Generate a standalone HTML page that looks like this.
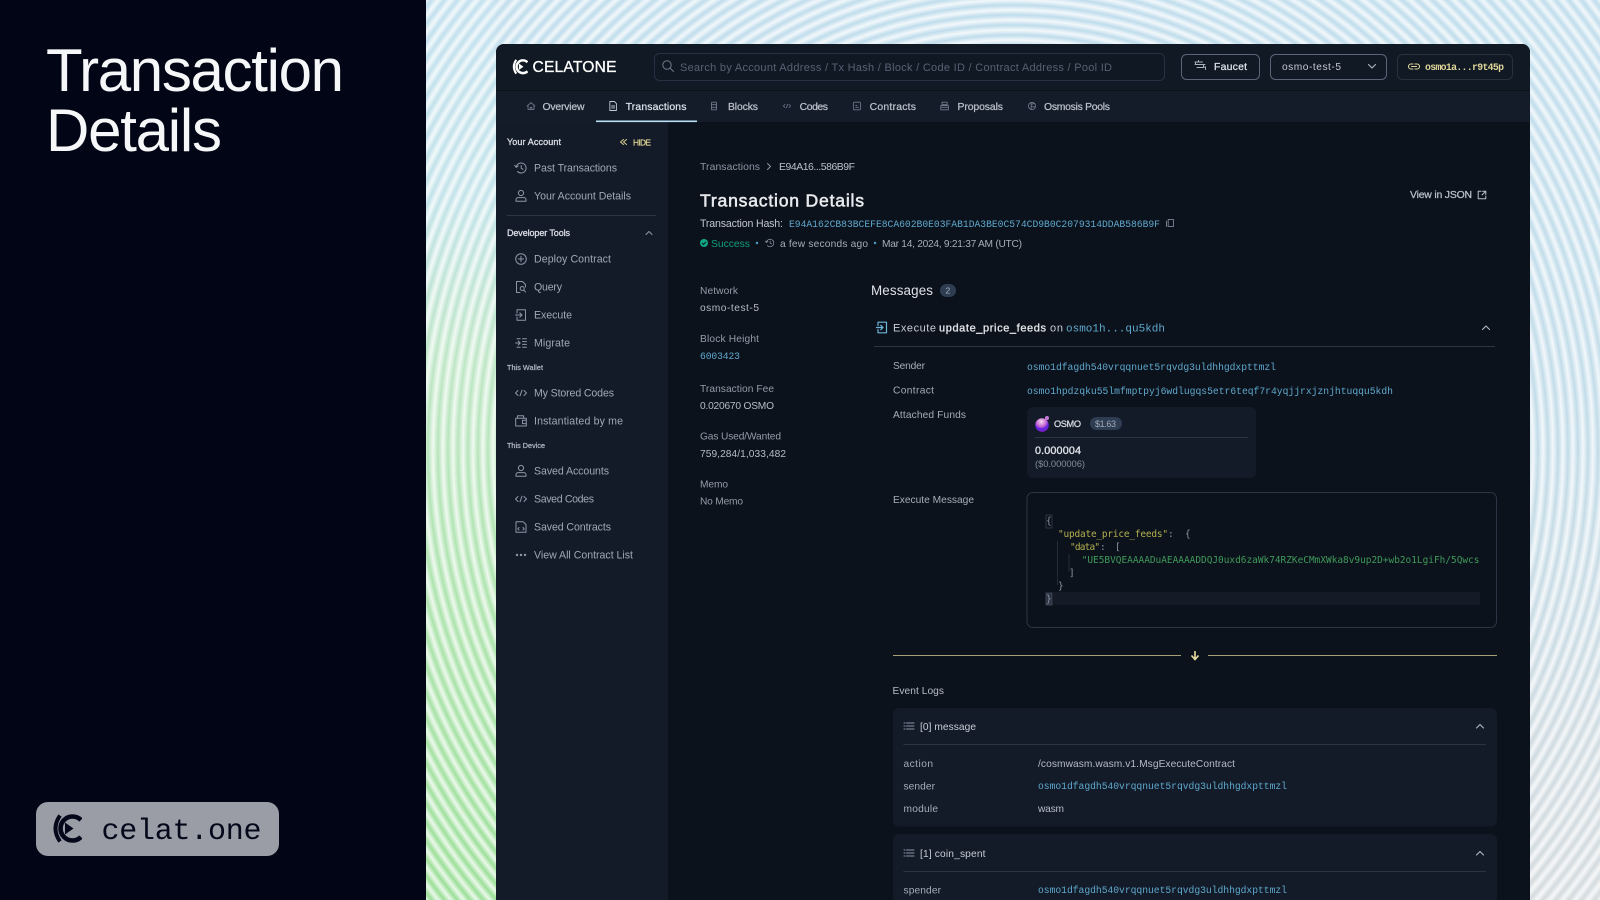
<!DOCTYPE html>
<html lang="en"><head><meta charset="utf-8"><title>Transaction Details</title>
<style>
html,body{margin:0;padding:0;width:1600px;height:900px;overflow:hidden;background:#020515}
.b{position:absolute;top:0;height:900px}
.rings{position:absolute;left:426px;top:0;width:1174px;height:900px;background:repeating-radial-gradient(circle at 587px 450px,rgba(255,255,255,.82) 0,rgba(255,255,255,.1) 5px,rgba(255,255,255,.82) 10px)}
svg{position:absolute;left:0;top:0;filter:blur(.3px)}
text{font-family:"Liberation Sans",sans-serif;font-size:10.6px;fill:#aab2bf}
.m{font-family:"Liberation Mono",monospace;font-size:9.7px;fill:#5fa8cc}
.h{font-size:10.4px;fill:#b9c0ca;stroke:#b9c0ca;stroke-width:.25}
.s{fill:#a0a8b5;font-size:10.6px;transform:translateY(.5px)}
.l{fill:#939ca9;font-size:10.2px}
.v{fill:#b6bcc6;font-size:10.2px}
.c{font-family:"DejaVu Sans Mono",monospace;font-size:9.45px;fill:#8d96a5}
.i{fill:none;stroke:#8d96a5;stroke-width:1;stroke-linecap:round;stroke-linejoin:round}
</style></head><body>
<div class="b" style="left:426px;width:70px;background:linear-gradient(#b9dcec 0,#b9dfe6 200px,#b5e3bd 360px,#a2e0a2 600px,#8edb8a 900px)"></div>
<div class="b" style="left:496px;width:1104px;background:linear-gradient(#b8d9ea 0,#bbd8e6 450px,#c6d6de 700px,#cfd6da 900px)"></div>
<div class="rings"></div>
<svg width="1600" height="900" viewBox="0 0 1600 900" xmlns="http://www.w3.org/2000/svg">
<defs>
<clipPath id="cc"><rect x="1040" y="500" width="440" height="120"/></clipPath>
<radialGradient id="os" cx=".45" cy=".25" r=".85"><stop offset="0" stop-color="#f6d8f0"/><stop offset=".45" stop-color="#c060d0"/><stop offset=".65" stop-color="#5a20e0"/><stop offset="1" stop-color="#b020d0"/></radialGradient>
<symbol id="logo" viewBox="0 0 30 30"><path d="M8 1.5Q-1 14.5 8 27.5" fill="none" stroke="currentColor" stroke-width="4"/><path d="M29 6A12 12 0 1 0 29 23" fill="none" stroke="currentColor" stroke-width="4.6"/><path d="M13 8.5L21.5 14.5L13 20.5Z" fill="currentColor"/></symbol>
</defs>
<!-- left panel -->
<rect x="0" y="0" width="426" height="900" fill="#020515"/>
<text x="46" y="91" style="font-size:60px;fill:#f6f7f8" textLength="298" lengthAdjust="spacing">Transaction</text>
<text x="46" y="151" style="font-size:60px;fill:#f6f7f8" textLength="176" lengthAdjust="spacing">Details</text>
<rect x="36" y="802" width="243" height="54" rx="12" fill="#9a9ca6"/>
<use href="#logo" x="52" y="814" width="30" height="30" style="color:#05081a"/>
<text x="101.5" y="839" style="font-family:'Liberation Mono',monospace;font-size:30px;fill:#05081a" textLength="160" lengthAdjust="spacing">celat.one</text>

<!-- app shell -->
<path d="M504 44H1522a8 8 0 0 1 8 8V900H496V52a8 8 0 0 1 8-8Z" fill="#0c121c"/>
<path d="M504 44H1522a8 8 0 0 1 8 8V90H496V52a8 8 0 0 1 8-8Z" fill="#111924"/>
<rect x="496" y="90" width="1034" height="32" fill="#141c2a"/>
<rect x="496" y="90" width="1034" height="1" fill="#0b1119"/>
<rect x="496" y="122" width="172" height="778" fill="#131b29"/>

<!-- header -->
<use href="#logo" x="512" y="59" width="16" height="16" style="color:#fff"/>
<text x="532.5" y="72" style="font-size:15.6px;fill:#fff;stroke:#fff;stroke-width:.3" textLength="84" lengthAdjust="spacing">CELATONE</text>
<rect x="654.5" y="53.5" width="510" height="27" rx="5" fill="#101823" stroke="#263243"/>
<g class="i" transform="translate(668,66)" style="stroke:#6f7a8a"><circle cx="-1" cy="-1" r="4.2"/><path d="M2 2L5.5 5.5"/></g>
<text x="680" y="71" style="font-size:11px;fill:#566173" textLength="432" lengthAdjust="spacing">Search by Account Address / Tx Hash / Block / Code ID / Contract Address / Pool ID</text>
<rect x="1181.5" y="54.5" width="78" height="25" rx="5" fill="none" stroke="#5a6678"/>
<g class="i" transform="translate(1200,66)" style="stroke:#aab2bf"><path d="M-5-4H2.5M-4.5-4V-1.5H3.5V1H5.5V3.5M-5-1.5H5M-1.5-5.5V-4M-3 1.5H3.5"/></g>
<text x="1214" y="70" class="h" style="fill:#dfe3ea;stroke:#dfe3ea" textLength="33" lengthAdjust="spacing">Faucet</text>
<rect x="1270.5" y="54.5" width="116" height="25" rx="5" fill="none" stroke="#5a6678"/>
<text x="1282" y="70" class="v" style="fill:#c5cbd5" textLength="59" lengthAdjust="spacing">osmo-test-5</text>
<path class="i" d="M1368.5 64.5L1372 68L1375.5 64.5" style="stroke:#aab2bf;stroke-width:1.2"/>
<rect x="1397.5" y="54.5" width="115" height="25" rx="5" fill="none" stroke="#29313e"/>
<g class="i" transform="translate(1414,66.5)" style="stroke:#e0d69a;stroke-width:1.1"><path d="M-1-2.5H-3a2.5 2.5 0 0 0 0 5H-1M1-2.5H3a2.5 2.5 0 0 1 0 5H1M-2.5 0H2.5"/></g>
<text x="1425" y="70" class="m" style="fill:#e0d69a;font-weight:700;font-size:9.8px" textLength="79" lengthAdjust="spacing">osmo1a...r9t45p</text>

<!-- tabs -->
<g class="i" transform="translate(531,106) scale(.85)" style="stroke:#6f7a8a"><path d="M-4.5 0L0-4L4.5 0M-3.5-.5V4H3.5V-.5M-1 4V1.5H1V4"/></g>
<text x="542.5" y="110" class="h" textLength="42" lengthAdjust="spacing">Overview</text>
<g class="i" transform="translate(613,106) scale(.9)" style="stroke:#c5cbd5"><path d="M-3.5-5H1.5L3.8-2.7V5H-3.5ZM-1.5 0H1.8M-1.5 2.2H1.8"/></g>
<text x="625.7" y="110" class="h" style="fill:#d8e2ea;stroke:#d8e2ea" textLength="60.7" lengthAdjust="spacing">Transactions</text>
<rect x="596" y="120.5" width="101" height="1.6" fill="#b8e0f5"/>
<g class="i" transform="translate(714,106) scale(.85)" style="stroke:#6f7a8a"><rect x="-3" y="-4.5" width="6" height="9" rx="1"/><path d="M-3-1.5H3M-3 1.5H3"/></g>
<text x="728" y="110" class="h" textLength="30" lengthAdjust="spacing">Blocks</text>
<g class="i" transform="translate(787,106) scale(.8)" style="stroke:#6f7a8a"><path d="M-4.5 0L-2.5-2M-4.5 0L-2.5 2M4.5 0L2.5-2M4.5 0L2.5 2M-.7 2.2L.7-2.2"/></g>
<text x="799.6" y="110" class="h" textLength="28.4" lengthAdjust="spacing">Codes</text>
<g class="i" transform="translate(857,106) scale(.85)" style="stroke:#6f7a8a"><rect x="-4" y="-4.5" width="8" height="9" rx="1"/><path d="M-1.5 1.5H1.5M-1.5-.5H0"/></g>
<text x="869.6" y="110" class="h" textLength="46.4" lengthAdjust="spacing">Contracts</text>
<g class="i" transform="translate(944.6,106) scale(.85)" style="stroke:#6f7a8a"><path d="M-3-4.5H3V-1.5H-3ZM-4.5-.5H4.5V4.5H-4.5ZM-4.5 1.5H4.5"/></g>
<text x="957.5" y="110" class="h" textLength="45.5" lengthAdjust="spacing">Proposals</text>
<g class="i" transform="translate(1032,106) scale(.85)" style="stroke:#6f7a8a"><circle r="4.2"/><path d="M-1-4V4M-1-2L3-3M-1 1L3.5 1"/></g>
<text x="1044" y="110" class="h" textLength="66" lengthAdjust="spacing">Osmosis Pools</text>

<!-- sidebar -->
<text x="507" y="145" style="font-size:9px;fill:#dcdfe5;stroke:#dcdfe5;stroke-width:.3" textLength="54" lengthAdjust="spacing">Your Account</text>
<path class="i" d="M623.5 139.5L620.5 142L623.5 144.5M626.5 139.5L623.5 142L626.5 144.5" style="stroke:#d9cf8e;stroke-width:1"/>
<text x="633" y="145.5" style="font-size:8.4px;fill:#d9cf8e;stroke:#d9cf8e;stroke-width:.3" textLength="18" lengthAdjust="spacing">HIDE</text>

<g class="i" transform="translate(521,168)"><path d="M-4.8-1A5 5 0 1 1-3.5 3.5M-6.3-2.6L-4.8-.7L-2.8-2M.2-2.5V.2L2 1.3"/></g>
<text x="534" y="171" class="s" textLength="83" lengthAdjust="spacing">Past Transactions</text>
<g class="i" transform="translate(521,196)"><circle cy="-3" r="2.6"/><path d="M-5 5.2V3.6A2 2 0 0 1-3 1.6H3A2 2 0 0 1 5 3.6V5.2Z"/></g>
<text x="534" y="199" class="s" textLength="97" lengthAdjust="spacing">Your Account Details</text>
<rect x="507" y="215" width="149" height="1" fill="#2b3544"/>

<text x="507" y="236" style="font-size:9px;fill:#dcdfe5;stroke:#dcdfe5;stroke-width:.3" textLength="63" lengthAdjust="spacing">Developer Tools</text>
<path class="i" d="M646 234.5L649 231.5L652 234.5"/>

<g class="i" transform="translate(521,259)"><circle r="5.3"/><path d="M-2.6 0H2.6M0-2.6V2.6"/></g>
<text x="534" y="262" class="s" textLength="77" lengthAdjust="spacing">Deploy Contract</text>
<g class="i" transform="translate(521,287)"><path d="M1.5-5.5H-4.5V5.5H-1M1.5-5.5L4.5-2.5V0"/><circle cx="1.2" cy="1.5" r="2"/><path d="M2.8 3.2L4.5 5"/></g>
<text x="534" y="290" class="s" textLength="28" lengthAdjust="spacing">Query</text>
<g class="i" transform="translate(521,315)"><path d="M-4-2V-5.3H4.5V5.3H-4V2M-5.5 0H1M-1.2-2.2L1 0L-1.2 2.2"/></g>
<text x="534" y="318" class="s" textLength="38" lengthAdjust="spacing">Execute</text>
<g class="i" transform="translate(521,343)"><path d="M-5.5 0H-.8M-2.8-2L-.8 0L-2.8 2M1.5-4.2H5.5M1.5-1.4H5.5M1.5 1.4H5.5M1.5 4.2H5.5M-4-4.2H-.8M-4 4.2H-.8"/></g>
<text x="534" y="346" class="s" textLength="36" lengthAdjust="spacing">Migrate</text>

<text x="507" y="370" style="font-size:7.2px;fill:#b0b7c3;stroke:#b0b7c3;stroke-width:.25" textLength="36" lengthAdjust="spacing">This Wallet</text>
<g class="i" transform="translate(521,393)"><path d="M-5.5 0L-3-2.5M-5.5 0L-3 2.5M5.5 0L3-2.5M5.5 0L3 2.5M-1 2.8L1-2.8"/></g>
<text x="534" y="396" class="s" textLength="80" lengthAdjust="spacing">My Stored Codes</text>
<g class="i" transform="translate(521,421)"><path d="M-5.3-2.8H5.3V5H-5.3ZM-3.5-2.8V-5.3H2.5V-2.8M5.3-.8H1.5V2.6H5.3"/></g>
<text x="534" y="424" class="s" textLength="89" lengthAdjust="spacing">Instantiated by me</text>

<text x="507" y="448" style="font-size:7.2px;fill:#b0b7c3;stroke:#b0b7c3;stroke-width:.25" textLength="38" lengthAdjust="spacing">This Device</text>
<g class="i" transform="translate(521,471)"><circle cy="-3" r="2.6"/><path d="M-5 5.2V3.6A2 2 0 0 1-3 1.6H3A2 2 0 0 1 5 3.6V5.2Z"/></g>
<text x="534" y="474" class="s" textLength="75" lengthAdjust="spacing">Saved Accounts</text>
<g class="i" transform="translate(521,499)"><path d="M-5.5 0L-3-2.5M-5.5 0L-3 2.5M5.5 0L3-2.5M5.5 0L3 2.5M-1 2.8L1-2.8"/></g>
<text x="534" y="502" class="s" textLength="60" lengthAdjust="spacing">Saved Codes</text>
<g class="i" transform="translate(521,527)"><path d="M-5-5.3H2L5-2.5V5.3H-5ZM-2 .5L-3.2 1.8L-2 3M2 .5L3.2 1.8L2 3"/></g>
<text x="534" y="530" class="s" textLength="77" lengthAdjust="spacing">Saved Contracts</text>
<g transform="translate(521,555)" fill="#8d96a5"><circle cx="-4" r="1.2"/><circle r="1.2"/><circle cx="4" r="1.2"/></g>
<text x="534" y="558" class="s" textLength="99" lengthAdjust="spacing">View All Contract List</text>

<!-- breadcrumb + title -->
<text x="700" y="170" style="fill:#8d96a5;font-size:10.4px" textLength="60" lengthAdjust="spacing">Transactions</text>
<path class="i" d="M767.5 163.5L770.5 166.5L767.5 169.5"/>
<text x="779" y="170" style="fill:#bcc2cc;font-size:10.4px" textLength="76" lengthAdjust="spacing">E94A16...586B9F</text>
<text x="700" y="206.5" style="font-size:17.6px;fill:#e8eaee;stroke:#e8eaee;stroke-width:.55" textLength="164" lengthAdjust="spacing">Transaction Details</text>
<text x="1410" y="198" class="h" textLength="62" lengthAdjust="spacing">View in JSON</text>
<g class="i" transform="translate(1482,195)" style="stroke:#b9c0ca"><path d="M-1-3.8H-3.8V3.8H3.8V1M.5-3.8H3.8V-.5M3.8-3.8L0 0"/></g>
<text x="700" y="227" style="fill:#c0c6cf;font-size:10.6px" textLength="83" lengthAdjust="spacing">Transaction Hash:</text>
<text x="789" y="227" class="m" textLength="371" lengthAdjust="spacing">E94A162CB83BCEFE8CA602B0E03FAB1DA3BE0C574CD9B0C2079314DDAB586B9F</text>
<g class="i" transform="translate(1170,223)" style="stroke:#6f7a8a"><path d="M-1.8-3.5H3.5V3.5H-1.8ZM-3.5-2V3.5"/></g>
<circle cx="704" cy="243" r="4" fill="#10a884"/><path d="M702 243L703.5 244.5L706 241.8" fill="none" stroke="#0c121c" stroke-width="1"/>
<text x="711" y="247" style="fill:#0e9f7c;font-size:10.4px" textLength="39" lengthAdjust="spacing">Success</text>
<circle cx="757" cy="243" r="1.2" fill="#4fa0cc"/>
<g class="i" transform="translate(770,243) scale(.75)"><path d="M-4.8-1A5 5 0 1 1-3.5 3.5M-6.3-2.6L-4.8-.7L-2.8-2M.2-2.5V.2L2 1.3"/></g>
<text x="780" y="247" class="v" style="fill:#a5adb9" textLength="88" lengthAdjust="spacing">a few seconds ago</text>
<circle cx="875" cy="243" r="1.2" fill="#4fa0cc"/>
<text x="882" y="247" class="v" style="fill:#a5adb9" textLength="140" lengthAdjust="spacing">Mar 14, 2024, 9:21:37 AM (UTC)</text>

<!-- left info -->
<text x="700" y="294" class="l" textLength="38" lengthAdjust="spacing">Network</text>
<text x="700" y="311" class="v" textLength="59" lengthAdjust="spacing">osmo-test-5</text>
<text x="700" y="342" class="l" textLength="59" lengthAdjust="spacing">Block Height</text>
<text x="700" y="359" class="m" textLength="40" lengthAdjust="spacing">6003423</text>
<text x="700" y="392" class="l" textLength="74" lengthAdjust="spacing">Transaction Fee</text>
<text x="700" y="409" class="v" textLength="74" lengthAdjust="spacing">0.020670 OSMO</text>
<text x="700" y="439.5" class="l" textLength="81" lengthAdjust="spacing">Gas Used/Wanted</text>
<text x="700" y="457" class="v" textLength="86" lengthAdjust="spacing">759,284/1,033,482</text>
<text x="700" y="487.5" class="l" textLength="28" lengthAdjust="spacing">Memo</text>
<text x="700" y="504.5" class="l" textLength="43" lengthAdjust="spacing">No Memo</text>

<!-- messages -->
<text x="871" y="295" style="font-size:13.4px;fill:#dfe2e7" textLength="62" lengthAdjust="spacing">Messages</text>
<rect x="940" y="284" width="16" height="13" rx="6.5" fill="#2e3d52"/>
<text x="945.5" y="293.5" style="font-size:8.5px;fill:#aab2bf">2</text>
<g class="i" transform="translate(882,327.5)" style="stroke:#6cb4da;stroke-width:1.2"><path d="M-4-2V-5.3H4.5V5.3H-4V2M-5.5 0H1M-1.2-2.2L1 0L-1.2 2.2"/></g>
<text x="893" y="331.5" style="font-size:11px;fill:#c8cdd4" textLength="43" lengthAdjust="spacing">Execute</text>
<text x="939" y="331.5" style="font-size:11px;fill:#e0e3e8;stroke:#e0e3e8;stroke-width:.35" textLength="107" lengthAdjust="spacing">update_price_feeds</text>
<text x="1050" y="331.5" style="font-size:11px;fill:#c8cdd4" textLength="13" lengthAdjust="spacing">on</text>
<text x="1066" y="331.5" class="m" style="font-size:11px" textLength="99" lengthAdjust="spacing">osmo1h...qu5kdh</text>
<path class="i" d="M1482.5 329.5L1486 326L1489.5 329.5" style="stroke:#aab2bf;stroke-width:1.2"/>
<rect x="874" y="346" width="621" height="1" fill="#2b3544"/>

<text x="893" y="369" class="l" style="fill:#a5adb9" textLength="32" lengthAdjust="spacing">Sender</text>
<text x="1027" y="370" class="m" textLength="249" lengthAdjust="spacing">osmo1dfagdh540vrqqnuet5rqvdg3uldhhgdxpttmzl</text>
<text x="893" y="393.5" class="l" style="fill:#a5adb9" textLength="41" lengthAdjust="spacing">Contract</text>
<text x="1027" y="394" class="m" textLength="366" lengthAdjust="spacing">osmo1hpdzqku55lmfmptpyj6wdlugqs5etr6teqf7r4yqjjrxjznjhtuqqu5kdh</text>
<text x="893" y="418" class="l" style="fill:#a5adb9" textLength="73" lengthAdjust="spacing">Attached Funds</text>

<rect x="1027" y="407" width="229" height="71" rx="6" fill="#131b29"/>
<circle cx="1042" cy="425" r="6.8" fill="url(#os)"/><circle cx="1047" cy="418" r="2" fill="#c878d8"/>
<text x="1054" y="427" style="font-size:9.2px;fill:#d5d9df;stroke:#d5d9df;stroke-width:.3" textLength="27" lengthAdjust="spacing">OSMO</text>
<rect x="1090" y="417" width="32" height="13" rx="6.5" fill="#2e3d52"/>
<text x="1095" y="427" style="font-size:9px;fill:#a0aab8" textLength="21" lengthAdjust="spacing">$1.63</text>
<rect x="1035" y="437" width="213" height="1" fill="#2b3544"/>
<text x="1035" y="454" style="font-size:10.8px;fill:#dfe2e7;stroke:#dfe2e7;stroke-width:.35" textLength="46" lengthAdjust="spacing">0.000004</text>
<text x="1035" y="467" style="font-size:9.4px;fill:#838c9a" textLength="50" lengthAdjust="spacing">($0.000006)</text>

<text x="893" y="503" class="l" style="fill:#a5adb9" textLength="81" lengthAdjust="spacing">Execute Message</text>
<rect x="1027" y="492.5" width="469.5" height="135" rx="6" fill="#0c121c" stroke="#2b3544"/>
<rect x="1053" y="592" width="427" height="13" fill="#151b26"/>
<rect x="1046" y="515" width="6" height="13" fill="none" stroke="#3a4453" stroke-width=".7"/>
<rect x="1046" y="593" width="6" height="12" fill="#2a3240" stroke="#4a5463" stroke-width=".7"/>
<path d="M1057.5 541V585M1069 554V572" stroke="#232c39" stroke-width="1" fill="none"/>
<text x="1046" y="524" class="c">{</text>
<text x="1058" y="537" class="c" style="fill:#b5b04f" textLength="110" lengthAdjust="spacing">"update_price_feeds"</text>
<text x="1168" y="537" class="c">:</text>
<text x="1185" y="537" class="c">{</text>
<text x="1070" y="550" class="c" style="fill:#b5b04f" textLength="30" lengthAdjust="spacing">"data"</text>
<text x="1100" y="550" class="c">:</text>
<text x="1115" y="550" class="c">[</text>
<g clip-path="url(#cc)"><text x="1081.7" y="563" class="c" style="fill:#3f9a5a">"UE5BVQEAAAADuAEAAAADDQJ0uxd6zaWk74RZKeCMmXWka8v9up2D+wb2o1LgiFh/5QwcsSh0aW5n"</text></g>
<text x="1069" y="576" class="c">]</text>
<text x="1058" y="589" class="c">}</text>
<text x="1046" y="602" class="c">}</text>

<rect x="893" y="655" width="288" height="1" fill="#a69f78"/>
<rect x="1208" y="655" width="289" height="1" fill="#a69f78"/>
<path d="M1195 651V659M1191.5 655.5L1195 659.5L1198.5 655.5" fill="none" stroke="#e8dca0" stroke-width="1.6"/>

<!-- event logs -->
<text x="892.5" y="694" class="v" textLength="51.5" lengthAdjust="spacing">Event Logs</text>
<rect x="893" y="708" width="604" height="118.5" rx="6" fill="#131b29"/>
<g class="i" transform="translate(909,726)"><path d="M-2.5-3H5M-2.5 0H5M-2.5 3H5M-5-3H-4M-5 0H-4M-5 3H-4"/></g>
<text x="920" y="730" class="v" style="fill:#c8cdd4" textLength="56" lengthAdjust="spacing">[0] message</text>
<path class="i" d="M1476.5 728L1480 724.5L1483.5 728" style="stroke:#aab2bf;stroke-width:1.2"/>
<rect x="903.5" y="744" width="582.5" height="1" fill="#2b3544"/>
<text x="903.5" y="767" class="l" style="fill:#a5adb9" textLength="29.5" lengthAdjust="spacing">action</text>
<text x="1038" y="767" class="v" textLength="197" lengthAdjust="spacing">/cosmwasm.wasm.v1.MsgExecuteContract</text>
<text x="903.5" y="789.5" class="l" style="fill:#a5adb9" textLength="31.5" lengthAdjust="spacing">sender</text>
<text x="1038" y="789" class="m" textLength="249" lengthAdjust="spacing">osmo1dfagdh540vrqqnuet5rqvdg3uldhhgdxpttmzl</text>
<text x="903.5" y="812" class="l" style="fill:#a5adb9" textLength="34.5" lengthAdjust="spacing">module</text>
<text x="1038" y="812" class="v" textLength="26" lengthAdjust="spacing">wasm</text>

<path d="M899 834H1491a6 6 0 0 1 6 6V900H893V840a6 6 0 0 1 6-6Z" fill="#131b29"/>
<g class="i" transform="translate(909,853)"><path d="M-2.5-3H5M-2.5 0H5M-2.5 3H5M-5-3H-4M-5 0H-4M-5 3H-4"/></g>
<text x="920" y="857" class="v" style="fill:#c8cdd4" textLength="65.5" lengthAdjust="spacing">[1] coin_spent</text>
<path class="i" d="M1476.5 855L1480 851.5L1483.5 855" style="stroke:#aab2bf;stroke-width:1.2"/>
<rect x="903.5" y="871" width="582.5" height="1" fill="#2b3544"/>
<text x="903.5" y="893.5" class="l" style="fill:#a5adb9" textLength="37.5" lengthAdjust="spacing">spender</text>
<text x="1038" y="893" class="m" textLength="249" lengthAdjust="spacing">osmo1dfagdh540vrqqnuet5rqvdg3uldhhgdxpttmzl</text>
</svg>
</body></html>
